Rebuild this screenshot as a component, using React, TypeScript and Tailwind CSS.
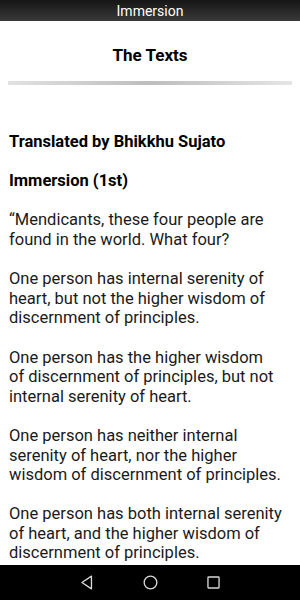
const paragraphs = [
  '“Mendicants, these four people are found in the world. What four?',
  'One person has internal serenity of heart, but not the higher wisdom of discernment of principles.',
  'One person has the higher wisdom of discernment of principles, but not internal serenity of heart.',
  'One person has neither internal serenity of heart, nor the higher wisdom of discernment of principles.',
  'One person has both internal serenity of heart, and the higher wisdom of discernment of principles.',
];

export default function App() {
  return (
    <div className="flex h-[600px] w-[300px] flex-col overflow-hidden bg-white font-['Roboto',sans-serif]">
      {/* title bar */}
      <div className="flex h-[21px] shrink-0 items-center justify-center bg-gradient-to-b from-[#161616] to-[#3a3a3a] text-[14px] leading-none text-white">
        Immersion
      </div>

      {/* content */}
      <div className="flex-1 overflow-hidden">
        <h1 className="pt-[23px] text-center text-[17px] font-bold leading-[22px] text-black">The Texts</h1>
        <div className="mx-2 mt-[15px] h-[4px] bg-gradient-to-r from-[#e2e2e2] via-[#bdbdbd] to-[#e6e6e6]" />

        <div className="pl-[9px] pr-[18px] pt-[47px] text-[16.5px] leading-[19.6px] text-[#1a1a1a]">
          <p className="font-bold text-black">Translated by Bhikkhu Sujato</p>
          <p className="mt-[19.6px] font-bold text-black">Immersion (1st)</p>
          {paragraphs.map((p, i) => (
            <p key={i} className="mt-[19.6px]">
              {p}
            </p>
          ))}
        </div>
      </div>

      {/* android nav bar */}
      <div className="flex h-[35px] shrink-0 items-center justify-center gap-[44px] bg-black">
        <svg width="19" height="19" viewBox="0 0 24 24" fill="none" stroke="#d8d8d8" strokeWidth="1.7" strokeLinejoin="round">
          <path d="M17 4v16L5 12z" />
        </svg>
        <svg width="19" height="19" viewBox="0 0 24 24" fill="none" stroke="#d8d8d8" strokeWidth="1.7">
          <circle cx="12" cy="12" r="8" />
        </svg>
        <svg width="19" height="19" viewBox="0 0 24 24" fill="none" stroke="#d8d8d8" strokeWidth="1.7">
          <rect x="5" y="5" width="14" height="14" rx="1" />
        </svg>
      </div>
    </div>
  );
}
